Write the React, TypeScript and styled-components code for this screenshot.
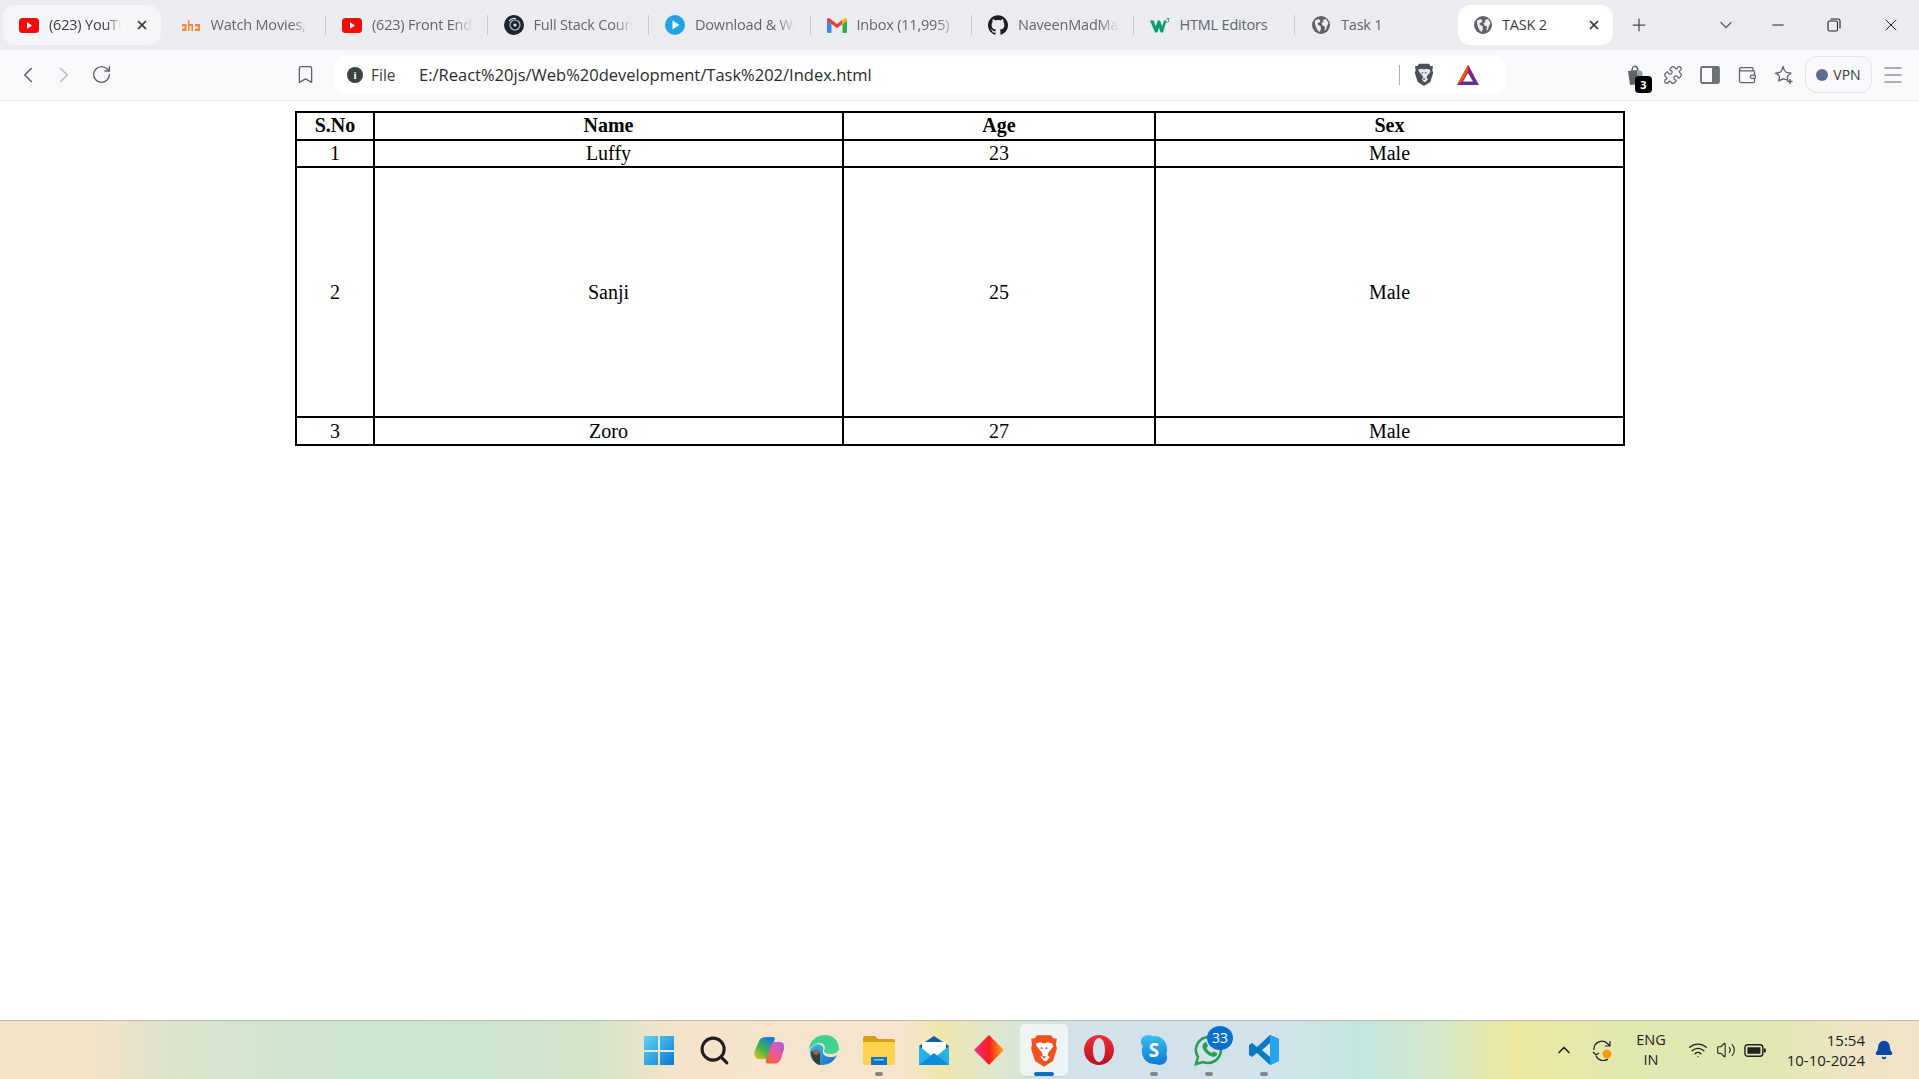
import React from 'react'
import styled, { createGlobalStyle } from 'styled-components'
import { ChevronLeft, ChevronRight, RotateCw, Bookmark, Plus, X, ChevronDown, Minus, Menu, Puzzle, Wallet, ChevronUp, Wifi, Volume2, Bell, Search } from 'lucide-react'
import { SiGithub } from 'react-icons/si'

const GlobalStyle = createGlobalStyle`
  html, body { margin: 0; padding: 0; background: #fff; }
  * { box-sizing: border-box; }
`

const YouTube = () => (
  <svg width="20" height="15" viewBox="0 0 20 15">
    <rect width="20" height="15" rx="3.5" fill="#f40a0a" />
    <path d="M8 4.2l5 3.3-5 3.3z" fill="#fff" />
  </svg>
)
const Aha = () => (
  <svg width="20" height="13" viewBox="0 0 20 13">
    <path d="M1 5h4.500v7H1V9.500h2.500V7.500H1zM7 1h1.500v4H12v7h-1.600V7H8.500v5H7zM14 5h5v7h-5V9.500h3.200v-2H14z" fill="#f58a36" />
  </svg>
)
const FullStack = () => (
  <svg width="20" height="20" viewBox="0 0 20 20">
    <circle cx="10" cy="10" r="10" fill="#1c2430" />
    <circle cx="11" cy="10" r="5" fill="none" stroke="#b8bec6" strokeWidth="1.2" />
    <path d="M5 6c2-2 5-3 7-2" fill="none" stroke="#dfe3e8" strokeWidth="1.2" />
    <circle cx="11" cy="10" r="1.6" fill="#dfe3e8" />
  </svg>
)
const PlayCircle = () => (
  <svg width="20" height="20" viewBox="0 0 20 20">
    <circle cx="10" cy="10" r="10" fill="#21a4e3" />
    <path d="M7.5 5.5l7 4.5-7 4.5z" fill="#fff" />
  </svg>
)
const Gmail = () => (
  <svg width="20" height="15" viewBox="0 0 20 15">
    <path d="M0 2v11.500A1.500 1.500 0 0 0 1.500 15H4.500V6z" fill="#4285f4" />
    <path d="M15.500 6v9h3a1.500 1.500 0 0 0 1.500-1.500V2z" fill="#34a853" />
    <path d="M4.500 6L0 2.500V1.800C0 .4 1.600-.4 2.700.4L4.500 1.800 10 6l5.500-4.200V6L10 10.200z" fill="#ea4335" />
    <path d="M15.500 1.800L17.300.4C18.400-.4 20 .4 20 1.800v.7L15.500 6z" fill="#fbbc04" />
  </svg>
)
const W3 = () => (
  <svg width="20" height="15" viewBox="0 0 20 15">
    <path d="M0 2.500h3.800l1.900 6 2-6h2.400l2 6 1.900-6h2.500L13 14.500h-2.500L9 9.500l-1.600 5H5z" fill="#0c9d6b" />
    <path d="M16.500.6h2.600l-1.200 1.400c1 .3 1.100 2.300-.6 2.300-.5 0-.9-.1-1.200-.4" fill="none" stroke="#0c9d6b" strokeWidth=".9" />
  </svg>
)
const Globe = () => (
  <svg width="18" height="18" viewBox="0 0 18 18">
    <circle cx="9" cy="9" r="9" fill="#5f6368" />
    <path d="M3 4.500l3.500-1.500 2 1.500-1 2-2 .5.500 2 2.500 1 .5 3-1.500 3C5 14 2.500 9 3 4.500zM11 4l3-1 2.500 4-1.500 3-1 3.500-1.500 1 .5-4-2.500-1-1-2.500 2-1z" fill="#eceef2" />
  </svg>
)

const BraveLion = ({ fill, face }: { fill: string; face: string }) => (
  <svg viewBox="0 0 24 28" width="100%" height="100%">
    <path d="M6 1h12l2 2.500 3 .5-.8 5 1 3-3.500 11L12 28l-7.700-5L.8 12l1-3L1 4l3-.5z" fill={fill} />
    <path d="M5 8l4-1 3 1 3-1 4 1 1 2.500-4 5-1 2.500 2 1.500-3 3.500h-2l-3-3.500 2-1.500-1-2.500-4-5z" fill={face} />
    <path d="M9.500 11l2 1-2.500 1zM14.500 11l-2 1 2.500 1zM10 19h4l-2 2z" fill={fill} />
  </svg>
)

const tabs = [
  { icon: <YouTube />, title: '(623) YouTube', open: true },
  { icon: <Aha />, title: 'Watch Movies, Web' },
  { icon: <YouTube />, title: '(623) Front End Dev' },
  { icon: <FullStack />, title: 'Full Stack Course' },
  { icon: <PlayCircle />, title: 'Download & Watch' },
  { icon: <Gmail />, title: 'Inbox (11,995)' },
  { icon: <SiGithub size={20} color="#1b1f23" />, title: 'NaveenMadMax' },
  { icon: <W3 />, title: 'HTML Editors', full: true },
  { icon: <Globe />, title: 'Task 1', full: true },
]

const rows = [
  { no: 1, name: 'Luffy', age: 23, sex: 'Male' },
  { no: 2, name: 'Sanji', age: 25, sex: 'Male', tall: true },
  { no: 3, name: 'Zoro', age: 27, sex: 'Male' },
]

const App = () => (
  <Screen>
    <GlobalStyle />
    <TabStrip>
      {tabs.map((t, i) => (
        <Tab key={i} $open={t.open} $last={i === tabs.length - 1}>
          <TabIcon>{t.icon}</TabIcon>
          <TabTitle $full={t.full}>{t.title}</TabTitle>
          {t.open && <TabClose><X size={14} strokeWidth={3} /></TabClose>}
        </Tab>
      ))}
      <ActiveTab>
        <TabIcon><Globe /></TabIcon>
        <ActiveTitle>TASK 2</ActiveTitle>
        <TabClose><X size={14} strokeWidth={3} /></TabClose>
      </ActiveTab>
      <NewTab><Plus size={20} strokeWidth={1.5} /></NewTab>
      <TabStripEnd>
        <ChevronDown size={20} strokeWidth={1.6} color="#5f6368" />
        <WindowBtns>
          <Minus size={18} strokeWidth={1.4} color="#222" />
          <svg width="14" height="14" viewBox="0 0 14 14" fill="none" stroke="#222" strokeWidth="1.1">
            <rect x="1" y="3" width="9.500" height="10" rx="1.500" />
            <path d="M3.500 1h7.500a2 2 0 0 1 2 2v7.500" />
          </svg>
          <X size={20} strokeWidth={1.2} color="#222" />
        </WindowBtns>
      </TabStripEnd>
    </TabStrip>

    <Toolbar>
      <NavGroup>
        <ChevronLeft size={26} strokeWidth={1.5} color="#5f6368" />
        <ChevronRight size={26} strokeWidth={1.5} color="#b9bcc2" />
        <ReloadIcon size={21} strokeWidth={1.6} color="#5f6368" />
      </NavGroup>
      <BookmarkSlot><Bookmark size={21} strokeWidth={1.5} color="#5f6368" /></BookmarkSlot>
      <AddressBar>
        <InfoDot>i</InfoDot>
        <SchemeLabel>File</SchemeLabel>
        <UrlText>E:/React%20js/Web%20development/Task%202/Index.html</UrlText>
        <AddressEnd>
          <AddressDivider />
          <ShieldIcon><BraveLion fill="#4a4f5c" face="#e6e7ea" /></ShieldIcon>
          <svg width="22" height="20" viewBox="0 0 22 20">
            <path d="M11 0l11 20H0z" fill="#662d91" />
            <path d="M11 0L0 20l5-3.500L11 6z" fill="#ff5000" />
            <path d="M11 0l5.500 10L11 6z" fill="#9e1f63" />
            <path d="M11 8l5 8.500H6z" fill="#fff" />
          </svg>
        </AddressEnd>
      </AddressBar>
      <ToolGroup>
        <BagSlot>
          <svg width="20" height="22" viewBox="0 0 20 22">
            <path d="M2 7l9-1 2 14-9 1z" fill="#5f6368" />
            <path d="M11 6l5 1 2 12-5 1z" fill="#9a9da3" />
            <path d="M6 7c0-6 5-6 6-1" fill="none" stroke="#5f6368" strokeWidth="1.500" />
          </svg>
          <BagBadge>3</BagBadge>
        </BagSlot>
        <Puzzle size={20} strokeWidth={1.5} color="#5f6368" />
        <svg width="20" height="20" viewBox="0 0 20 20">
          <rect x="1" y="2" width="18" height="16" rx="1.500" fill="none" stroke="#6d7075" strokeWidth="1.800" />
          <rect x="12" y="2" width="7" height="16" fill="#6d7075" />
        </svg>
        <Wallet size={20} strokeWidth={1.5} color="#5f6368" />
        <svg width="20" height="20" viewBox="0 0 20 20" fill="none" stroke="#5f6368" strokeWidth="1.300">
          <path d="M9 1.500c.8 3.500 1.800 4.800 2.800 5.500 1 .6 3 .9 5.200 1.200-2 1.300-3.200 2.300-3.500 3.300-.3 1 0 2.300.3 4-1.600-.9-3-1.500-4.300-1.500-1.300 0-2.900.8-4.800 2 .6-2 .9-3.500.6-4.600C5 10.300 3.700 9.300 1.500 8.200 4 7.900 5.600 7.600 6.500 7c.9-.7 1.700-2.500 2.500-5.500z" strokeLinejoin="round" />
          <path d="M16 14v5M13.500 16.500h5" />
        </svg>
        <VpnPill><VpnDot /><span>VPN</span></VpnPill>
        <Menu size={24} strokeWidth={1.2} color="#5f6368" />
      </ToolGroup>
    </Toolbar>

    <Page>
      <DataTable>
        <colgroup>
          <col width="78" />
          <col width="469" />
          <col width="312" />
          <col width="469" />
        </colgroup>
        <thead>
          <tr>
            <HeadCell>S.No</HeadCell>
            <HeadCell>Name</HeadCell>
            <HeadCell>Age</HeadCell>
            <HeadCell>Sex</HeadCell>
          </tr>
        </thead>
        <tbody>
          {rows.map((r) => (
            <Row key={r.no} $tall={r.tall}>
              <Cell>{r.no}</Cell>
              <Cell>{r.name}</Cell>
              <Cell>{r.age}</Cell>
              <Cell>{r.sex}</Cell>
            </Row>
          ))}
        </tbody>
      </DataTable>
    </Page>

    <Taskbar>
      <TaskIcons>
        <TaskApp>
          <svg width="30" height="30" viewBox="0 0 30 30">
            <defs>
              <linearGradient id="win" x1="0" y1="0" x2="1" y2="1">
                <stop offset="0" stopColor="#5fd4f5" />
                <stop offset="1" stopColor="#0a78d4" />
              </linearGradient>
            </defs>
            <path d="M0 1h14v14H0zM16 1h14v14H16zM0 17h14v13H0zM16 17h14v13H16z" fill="url(#win)" />
          </svg>
        </TaskApp>
        <TaskApp><Search size={33} strokeWidth={2.2} color="#1f1f1f" /></TaskApp>
        <TaskApp>
          <svg width="30" height="28" viewBox="0 0 30 28">
            <defs>
              <linearGradient id="copL" x1="0" y1="1" x2=".7" y2="0">
                <stop offset="0" stopColor="#f3c11c" />
                <stop offset=".5" stopColor="#3fb44a" />
                <stop offset="1" stopColor="#1f77e0" />
              </linearGradient>
              <linearGradient id="copR" x1=".3" y1="1" x2="1" y2="0">
                <stop offset="0" stopColor="#f3633c" />
                <stop offset=".5" stopColor="#e65aa8" />
                <stop offset="1" stopColor="#9a62e0" />
              </linearGradient>
            </defs>
            <path d="M12 1h7c2 0 2 2 1.500 3L15 20c-.7 2-2 3-4 3H5C1 23-.5 19 .8 15L5 5c1-2.500 4-4 7-4z" fill="url(#copL)" />
            <path d="M26 6h-5c-2 0-3 1-4 3l-5 15c-.7 2 .5 3.500 2 3.500h7c3 0 5-2 6-4.500l3-10c1-4-1-7-4-7z" fill="url(#copR)" />
          </svg>
        </TaskApp>
        <TaskApp>
          <svg width="32" height="32" viewBox="0 0 32 32">
            <defs>
              <linearGradient id="edge" x1="0" y1="0" x2="1" y2="1">
                <stop offset="0" stopColor="#39c3e8" />
                <stop offset="1" stopColor="#1b67c0" />
              </linearGradient>
            </defs>
            <path d="M1 15C2 6 9 1 17 1c8 0 14 6 14 13 0 4-4 6-9 6-3 0-6-1-6-3 0-1 1-2 1-4-1-4-6-5-9-3-3 1-5 3-7 5z" fill="#41d28f" />
            <path d="M2 16c2-4 7-7 11-5 2 1 3 3 2 5-1 4 2 7 7 7 3 0 5 0 7-2-3 7-9 10-15 10C7 31 1 24 2 16z" fill="url(#edge)" />
            <path d="M3 18c3-2 7-2 9 1v12c-5-1-9-6-9-13z" fill="#3d3a3a" />
            <circle cx="8" cy="18" r="3" fill="#8a6a55" />
          </svg>
        </TaskApp>
        <TaskApp $dot>
          <svg width="32" height="30" viewBox="0 0 32 30">
            <path d="M0 3a2 2 0 0 1 2-2h10l3 3h15a2 2 0 0 1 2 2v4H0z" fill="#d79d14" />
            <path d="M0 7h32v21a2 2 0 0 1-2 2H2a2 2 0 0 1-2-2z" fill="#fbd34f" />
            <rect x="8" y="22" width="16" height="8" fill="#1173c7" />
            <rect x="11" y="24" width="10" height="1.500" fill="#7fc3ee" />
          </svg>
        </TaskApp>
        <TaskApp>
          <svg width="30" height="30" viewBox="0 0 30 30">
            <path d="M15 1L0 11v19h30V11z" fill="#0d5fa8" />
            <path d="M3 7h24v14H3z" fill="#fff" />
            <path d="M0 11l15 12 15-12v19H0z" fill="#27b0ea" />
            <path d="M0 30l15-12 15 12z" fill="#0c8fd8" />
          </svg>
        </TaskApp>
        <TaskApp>
          <svg width="30" height="30" viewBox="0 0 30 30">
            <defs>
              <linearGradient id="gem" x1="0" y1="0" x2="1" y2="0">
                <stop offset="0" stopColor="#f0358f" />
                <stop offset=".5" stopColor="#fb1a1a" />
                <stop offset="1" stopColor="#fbb316" />
              </linearGradient>
            </defs>
            <path d="M15 0l15 15-15 15L0 15z" fill="url(#gem)" />
          </svg>
        </TaskApp>
        <TaskAppActive>
          <BraveBox><BraveLion fill="#f1501f" face="#fff" /></BraveBox>
          <RunningBar />
        </TaskAppActive>
        <TaskApp>
          <svg width="30" height="30" viewBox="0 0 30 30">
            <defs>
              <linearGradient id="opera" x1="0" y1="0" x2="0" y2="1">
                <stop offset="0" stopColor="#f0323c" />
                <stop offset="1" stopColor="#b80f1f" />
              </linearGradient>
            </defs>
            <path fillRule="evenodd" d="M15 0c8.300 0 15 6.700 15 15s-6.700 15-15 15S0 23.300 0 15 6.700 0 15 0zm0 3c-3.500 0-6 5.400-6 12s2.500 12 6 12 6-5.400 6-12-2.500-12-6-12z" fill="url(#opera)" />
          </svg>
        </TaskApp>
        <TaskApp $dot>
          <svg width="28" height="30" viewBox="0 0 28 32">
            <defs>
              <linearGradient id="sky" x1="0" y1="0" x2="0" y2="1">
                <stop offset="0" stopColor="#3cc0f4" />
                <stop offset="1" stopColor="#0a78d0" />
              </linearGradient>
            </defs>
            <path d="M8 0c3 0 5 2 7 1 7 0 13 6 13 14 0 2 0 4-1 5 1 2 1 3 1 4 0 5-4 8-8 8-2 0-3-1-5-1C7 31 1 25 1 17c0-2 0-3 1-5-1-1-2-3-2-5 0-4 4-7 8-7z" fill="url(#sky)" />
            <SkypeLetter x="14" y="23" textAnchor="middle">S</SkypeLetter>
          </svg>
        </TaskApp>
        <TaskApp $dot>
          <svg width="32" height="32" viewBox="0 0 32 32">
            <path d="M16 3a13 13 0 0 0-11 20L3 30l7-2a13 13 0 1 0 6-25z" fill="none" stroke="#2b9c55" strokeWidth="2.600" />
            <path d="M11 9c1-1 2.500-1 3 .5l1 2.500-1.500 2c1 2 3 4 5 5l2-1.500 2.500 1c1.500.6 1.500 2 .5 3-2 2-5 1.500-8-.5-3-2-5.500-5-6-8 0-2 .5-3 1.500-4z" fill="#2b9c55" />
          </svg>
          <CountBadge>33</CountBadge>
        </TaskApp>
        <TaskApp $dot>
          <svg width="30" height="30" viewBox="0 0 30 30">
            <path d="M21 0l9 4v22l-9 4L8 18l-5 4-3-2v-10l3-2 5 4z" fill="#0a7ac2" />
            <path d="M21 0l9 4v22l-9 4z" fill="#27a5ec" />
            <path d="M21 8l-8 7 8 7z" fill="#e1eef2" fillOpacity=".95" />
          </svg>
        </TaskApp>
      </TaskIcons>
      <Tray>
        <ChevronUp size={20} strokeWidth={2} color="#222" />
        <SyncSlot>
          <svg width="22" height="22" viewBox="0 0 22 22" fill="none" stroke="#222" strokeWidth="1.200">
            <path d="M2 11a8 8 0 0 1 14-6l2 2M18 2v5h-5" />
            <path d="M16 20a8 8 0 0 1-12-3M1 13l3 3 3-2" />
            <circle cx="15" cy="15" r="4.500" fill="#f59b0a" stroke="none" />
          </svg>
        </SyncSlot>
        <LangBox>ENG<br />IN</LangBox>
        <TrayIcons>
          <Wifi size={20} strokeWidth={1.6} color="#222" />
          <Volume2 size={20} strokeWidth={1.3} color="#222" />
          <svg width="22" height="13" viewBox="0 0 20 12">
            <rect x=".7" y=".7" width="16.500" height="10.600" rx="2.500" fill="none" stroke="#222" strokeWidth="1.300" />
            <rect x="3" y="3" width="12" height="6" fill="#222" />
            <rect x="18" y="4" width="2" height="4" rx="1" fill="#222" />
          </svg>
        </TrayIcons>
        <ClockBox>15:54<br />10-10-2024</ClockBox>
        <Bell size={20} fill="#0a48a8" color="#0a48a8" />
      </Tray>
    </Taskbar>
  </Screen>
)

export default App

const Screen = styled.div`
  width: 1919px;
  height: 1079px;
  display: flex;
  flex-direction: column;
  overflow: hidden;
  font-family: "Open Sans", "Noto Sans", sans-serif;
`
const TabStrip = styled.div`
  height: 50px;
  flex: none;
  background: #ebecf0;
  padding: 5px 0 5px 3px;
  display: flex;
  align-items: stretch;
`
const Tab = styled.div<{ $open?: boolean; $last?: boolean }>`
  flex: none;
  width: 161.500px;
  display: flex;
  align-items: center;
  padding: 0 15px 0 16px;
  color: #63666b;
  font-size: 14.500px;
  border-radius: 12px;
  position: relative;
  background: ${(p) => (p.$open ? '#f4f5f7' : 'transparent')};
  ${(p) => p.$open && 'width: 158px; margin-right: 3.500px; padding-right: 12px; color: #3c4043;'}
  ${(p) =>
    !p.$last &&
    !p.$open &&
    `&::after {
      content: '';
      position: absolute;
      right: 0;
      top: 10px;
      bottom: 10px;
      width: 1px;
      background: #c9cacf;
    }`}
`
const TabIcon = styled.div`
  width: 20px;
  flex: none;
  display: flex;
  align-items: center;
  justify-content: center;
`
const TabTitle = styled.div<{ $full?: boolean }>`
  margin-left: 10px;
  flex: 1;
  min-width: 0;
  white-space: nowrap;
  overflow: hidden;
  letter-spacing: -0.2px;
  padding-bottom: 2px;
  ${(p) =>
    !p.$full &&
    `-webkit-mask-image: linear-gradient(to right, #000 80%, transparent 100%);
     mask-image: linear-gradient(to right, #000 80%, transparent 100%);`}
`
const TabClose = styled.div`
  flex: none;
  display: flex;
  color: #333;
  margin-left: 14px;
`
const ActiveTab = styled.div`
  flex: none;
  width: 155px;
  margin-left: 1.500px;
  display: flex;
  align-items: center;
  padding: 0 12px 0 15px;
  background: #fff;
  border-radius: 12px;
  font-size: 14.500px;
  color: #3c4043;
`
const ActiveTitle = styled.div`
  flex: 1;
  margin-left: 9px;
  letter-spacing: -0.2px;
  padding-bottom: 2px;
`
const NewTab = styled.div`
  flex: none;
  width: 52px;
  display: flex;
  align-items: center;
  justify-content: center;
  color: #4a4d52;
`
const TabStripEnd = styled.div`
  flex: 1;
  display: flex;
  align-items: center;
  padding-left: 51px;
`
const WindowBtns = styled.div`
  display: flex;
  align-items: center;
  gap: 40px;
  margin-left: 33px;
`
const Toolbar = styled.div`
  height: 51px;
  flex: none;
  background: #f9f9fb;
  border-bottom: 1px solid #e9e9ee;
  display: flex;
  align-items: center;
  padding: 0 0 1px 15px;
`
const NavGroup = styled.div`
  width: 100px;
  flex: none;
  display: flex;
  align-items: center;
  gap: 10px;
`
const ReloadIcon = styled(RotateCw)`
  margin-left: 4px;
`
const BookmarkSlot = styled.div`
  width: 220px;
  flex: none;
  display: flex;
  justify-content: flex-end;
  padding-right: 4px;
  margin-left: -15px;
`
const AddressBar = styled.div`
  width: 1171px;
  height: 40px;
  flex: none;
  margin-left: 15px;
  background: #fff;
  border-radius: 12px;
  display: flex;
  align-items: center;
  padding: 0 27px 0 12px;
`
const InfoDot = styled.div`
  width: 16px;
  height: 16px;
  border-radius: 50%;
  background: #3c4043;
  color: #fff;
  font: 700 11px/16px "Liberation Serif", serif;
  text-align: center;
`
const SchemeLabel = styled.div`
  margin-left: 8px;
  width: 48px;
  font-size: 15.500px;
  color: #3c4043;
`
const UrlText = styled.div`
  flex: 1;
  font-size: 16.500px;
  color: #2b2b2b;
`
const AddressEnd = styled.div`
  display: flex;
  align-items: center;
`
const AddressDivider = styled.div`
  width: 1px;
  height: 20px;
  background: #aeb0b5;
  margin-right: 14px;
`
const ShieldIcon = styled.div`
  width: 20px;
  height: 23px;
  margin-right: 23px;
`
const ToolGroup = styled.div`
  flex: 1;
  display: flex;
  align-items: center;
  padding-left: 120px;
  gap: 17px;
`
const BagSlot = styled.div`
  position: relative;
  display: flex;
  width: 20px;
`
const BagBadge = styled.div`
  position: absolute;
  right: -6px;
  bottom: -7px;
  width: 17px;
  height: 17px;
  border-radius: 4px;
  background: #000;
  color: #fff;
  font: 700 11px/17px "Open Sans", sans-serif;
  text-align: center;
`
const VpnPill = styled.div`
  width: 67px;
  height: 37px;
  border: 1px solid #e3e4e8;
  border-radius: 12px;
  display: flex;
  align-items: center;
  justify-content: center;
  gap: 5px;
  font-size: 14px;
  color: #3c4043;
  margin-left: -6px;
  margin-right: -8px;
`
const VpnDot = styled.div`
  width: 12px;
  height: 12px;
  border-radius: 50%;
  background: #5d6a92;
`
const Page = styled.div`
  flex: 1;
  background: #fff;
  padding: 10px 0 0 295px;
`
const DataTable = styled.table`
  border-collapse: collapse;
  table-layout: fixed;
  width: 1329px;
  border: 2px solid #000;
  font-family: "Liberation Serif", "Times New Roman", serif;
  font-size: 20px;
  color: #000;
`
const HeadCell = styled.th`
  border: 2px solid #000;
  height: 28px;
  padding: 0 0 2px;
  text-align: center;
  font-weight: 700;
`
const Row = styled.tr<{ $tall?: boolean }>`
  height: ${(p) => (p.$tall ? '250px' : '28px')};
  &:first-child {
    height: 27px;
  }
`
const Cell = styled.td`
  border: 2px solid #000;
  padding: 0;
  text-align: center;
`
const Taskbar = styled.div`
  height: 59px;
  flex: none;
  border-top: 1px solid #b9b7ae;
  background: linear-gradient(90deg, #f5e3c9 0%, #f3e3c9 5%, #dbe3cc 9%, #cfe5cf 16%, #cde5cf 25%, #d4e4c9 31%, #f3e4cb 35%, #f5e5cf 47%, #efe6ad 49%, #dde6d0 52%, #d3e2ea 56%, #d2e2ea 66%, #c4e6df 71%, #d4e7c8 75%, #ece9a0 79%, #e0e8b0 85%, #e0e8b2 92%, #efe4c6 97%, #f1e3cb 100%);
  display: flex;
  align-items: center;
  position: relative;
`
const TaskIcons = styled.div`
  flex: none;
  margin-left: 635px;
  display: flex;
  align-items: center;
  gap: 7px;
`
const TaskApp = styled.div<{ $dot?: boolean }>`
  width: 48px;
  height: 52px;
  position: relative;
  display: flex;
  align-items: center;
  justify-content: center;
  ${(p) =>
    p.$dot &&
    `&::after {
      content: '';
      position: absolute;
      left: 20px;
      bottom: 0;
      width: 8px;
      height: 4px;
      border-radius: 2px;
      background: #868686;
    }`}
`
const TaskAppActive = styled(TaskApp)`
  background: rgba(255, 255, 255, 0.6);
  border-radius: 5px;
  box-shadow: 0 1px 1px rgba(0, 0, 0, 0.08);
`
const BraveBox = styled.div`
  width: 28px;
  height: 33px;
`
const RunningBar = styled.div`
  position: absolute;
  left: 14px;
  bottom: 0;
  width: 20px;
  height: 4px;
  border-radius: 2px;
  background: #0a6fcb;
`
const SkypeLetter = styled.text`
  font: 700 20px "Open Sans", sans-serif;
  fill: #fff;
`
const CountBadge = styled.div`
  position: absolute;
  top: 2px;
  right: 0;
  width: 26px;
  height: 24px;
  border-radius: 50%;
  background: #0a6fcb;
  color: #fff;
  font-size: 14px;
  line-height: 24px;
  text-align: center;
`
const Tray = styled.div`
  flex: 1;
  display: flex;
  align-items: center;
  padding-left: 266px;
  color: #222;
`
const SyncSlot = styled.div`
  margin-left: 18px;
  display: flex;
`
const LangBox = styled.div`
  margin-left: 20px;
  width: 34px;
  font-size: 14.500px;
  line-height: 20px;
  text-align: center;
`
const TrayIcons = styled.div`
  margin-left: 20px;
  display: flex;
  align-items: center;
  gap: 8px;
`
const ClockBox = styled.div`
  margin-left: 17px;
  width: 82px;
  font-size: 15px;
  line-height: 20px;
  text-align: right;
  margin-right: 9px;
`
